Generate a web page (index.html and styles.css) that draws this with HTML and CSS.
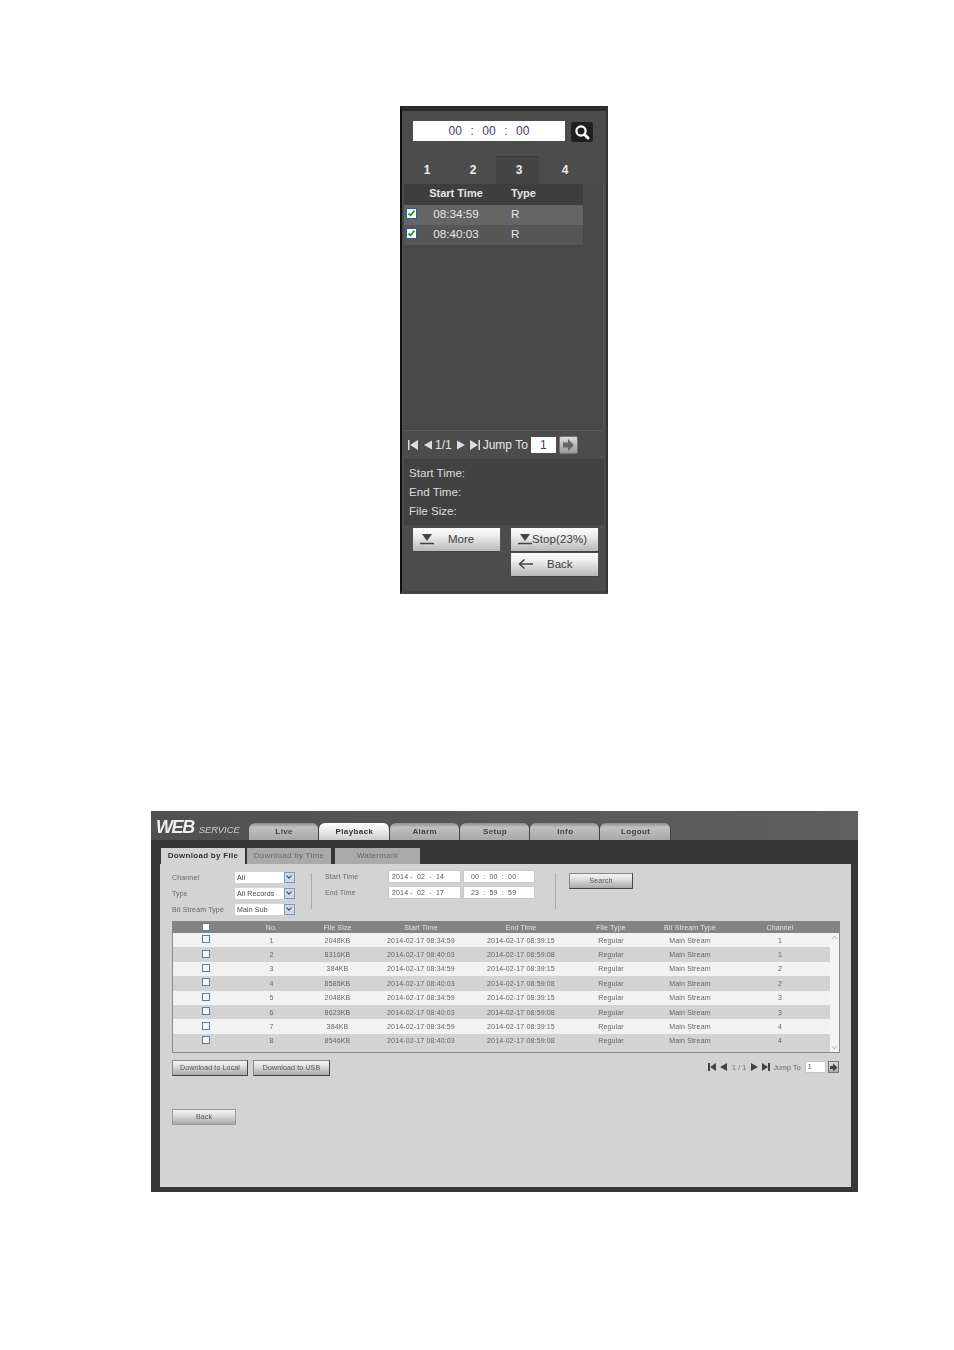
FILE: index.html
```html
<!DOCTYPE html>
<html lang="en">
<head>
<meta charset="utf-8">
<title>Playback</title>
<link rel="stylesheet" href="styles.css">
</head>
<body>
<section class="panel">
  <div class="time-row">
    <div class="time-box"><span>00</span><span>:</span><span>00</span><span>:</span><span>00</span></div>
    <div class="search-btn"><svg viewBox="0 0 22 20" width="22" height="20"><circle cx="10" cy="9" r="4.6" fill="none" stroke="#fff" stroke-width="2.2"/><path d="M13.5 12.5L17 16" stroke="#fff" stroke-width="3" stroke-linecap="round"/></svg></div>
  </div>
  <div class="num-tabs"><div>1</div><div>2</div><div class="on">3</div><div>4</div></div>
  <div class="list">
    <div class="list-table">
      <div class="lrow lhead"><span></span><span class="lt">Start Time</span><span>Type</span></div>
      <div class="lrow a"><svg class="chk" viewBox="0 0 11 11" width="11" height="11"><rect x=".5" y=".5" width="10" height="10" fill="#fff" stroke="#2a5a8a"/><path d="M2.5 5.500l2 2 4-5" fill="none" stroke="#1d9a2e" stroke-width="1.8"/></svg><span class="lt">08:34:59</span><span>R</span></div>
      <div class="lrow b"><svg class="chk" viewBox="0 0 11 11" width="11" height="11"><rect x=".5" y=".5" width="10" height="10" fill="#fff" stroke="#2a5a8a"/><path d="M2.5 5.500l2 2 4-5" fill="none" stroke="#1d9a2e" stroke-width="1.8"/></svg><span class="lt">08:40:03</span><span>R</span></div>
    </div>
  </div>
  <div class="pager">
    <svg viewBox="0 0 12 12" width="12" height="12"><path d="M1 1h1.500v10H1zM11 1v10L3 6z" fill="#ddd"/></svg>
    <svg class="ic2" viewBox="0 0 10 12" width="10" height="12"><path d="M9 1.500v9L1 6z" fill="#ddd"/></svg>
    <span class="pnum">1/1</span>
    <svg class="ic3" viewBox="0 0 10 12" width="10" height="12"><path d="M1 1.500v9L9 6z" fill="#ddd"/></svg>
    <svg class="ic4" viewBox="0 0 12 12" width="12" height="12"><path d="M11 1H9.500v10H11zM1 1v10l8-5z" fill="#ddd"/></svg>
    <span class="jump">Jump To</span>
    <span class="page-in">1</span>
    <span class="go"><svg viewBox="0 0 14 14" width="14" height="14"><path d="M2 4.500h5V1l6 6-6 6V9.500H2z" fill="#666"/></svg></span>
  </div>
  <div class="info"><div>Start Time:</div><div>End Time:</div><div>File Size:</div></div>
  <div class="actions">
    <div class="pbtn wide"><svg viewBox="0 0 14 12" width="14" height="12"><path d="M2 1h10L7 8z" fill="#444"/><path d="M0 10.500h14" stroke="#444" stroke-width="1.500"/></svg><span class="more">More</span></div>
    <div class="stack">
      <div class="pbtn"><svg viewBox="0 0 14 12" width="14" height="12"><path d="M2 1h10L7 8z" fill="#444"/><path d="M0 10.500h14" stroke="#444" stroke-width="1.500"/></svg><span class="stop">Stop(23%)</span></div>
      <div class="pbtn"><svg viewBox="0 0 16 12" width="16" height="12"><path d="M1 6h14M6.500 1.500L1.500 6l5 4.500" fill="none" stroke="#444" stroke-width="1.500"/></svg><span class="backt">Back</span></div>
    </div>
  </div>
</section>

<section class="app">
  <header class="top">
    <div class="logo"><b>WEB</b><i>SERVICE</i></div>
    <nav class="nav"><div>Live</div><div class="on">Playback</div><div>Alarm</div><div>Setup</div><div>Info</div><div>Logout</div></nav>
  </header>
  <div class="subbar"><div class="on">Download by File</div><div class="gap1">Download by Time</div><div class="gap2">Watermark</div></div>
  <main class="content">
    <div class="filters">
      <div class="f-left">
        <label>Channel</label><div class="sel">All<i></i></div>
        <label>Type</label><div class="sel">All Records<i></i></div>
        <label>Bit Stream Type</label><div class="sel">Main Sub<i></i></div>
      </div>
      <div class="vline"></div>
      <div class="f-mid">
        <label>Start Time</label><div class="dt d">2014 - &nbsp;02 &nbsp;- &nbsp;14</div><div class="dt t">00 &nbsp;: &nbsp;00 &nbsp;: &nbsp;00</div>
        <label>End Time</label><div class="dt d">2014 - &nbsp;02 &nbsp;- &nbsp;17</div><div class="dt t">23 &nbsp;: &nbsp;59 &nbsp;: &nbsp;59</div>
      </div>
      <div class="vline v2"></div>
      <div class="gbtn search">Search</div>
    </div>
    <div class="table">
      <div class="row head"><span><em class="cb w"></em></span><span>No.</span><span>File Size</span><span>Start Time</span><span>End Time</span><span>File Type</span><span>Bit Stream Type</span><span>Channel</span></div>
      <div class="body">
        <div class="rows">
          <div class="row l"><span><em class="cb"></em></span><span>1</span><span>2048KB</span><span>2014-02-17 08:34:59</span><span>2014-02-17 08:39:15</span><span>Regular</span><span>Main Stream</span><span>1</span></div>
          <div class="row"><span><em class="cb"></em></span><span>2</span><span>8316KB</span><span>2014-02-17 08:40:03</span><span>2014-02-17 08:59:08</span><span>Regular</span><span>Main Stream</span><span>1</span></div>
          <div class="row l"><span><em class="cb"></em></span><span>3</span><span>384KB</span><span>2014-02-17 08:34:59</span><span>2014-02-17 08:39:15</span><span>Regular</span><span>Main Stream</span><span>2</span></div>
          <div class="row"><span><em class="cb"></em></span><span>4</span><span>8585KB</span><span>2014-02-17 08:40:03</span><span>2014-02-17 08:59:08</span><span>Regular</span><span>Main Stream</span><span>2</span></div>
          <div class="row l"><span><em class="cb"></em></span><span>5</span><span>2048KB</span><span>2014-02-17 08:34:59</span><span>2014-02-17 08:39:15</span><span>Regular</span><span>Main Stream</span><span>3</span></div>
          <div class="row"><span><em class="cb"></em></span><span>6</span><span>8623KB</span><span>2014-02-17 08:40:03</span><span>2014-02-17 08:59:08</span><span>Regular</span><span>Main Stream</span><span>3</span></div>
          <div class="row l"><span><em class="cb"></em></span><span>7</span><span>384KB</span><span>2014-02-17 08:34:59</span><span>2014-02-17 08:39:15</span><span>Regular</span><span>Main Stream</span><span>4</span></div>
          <div class="row"><span><em class="cb"></em></span><span>8</span><span>8546KB</span><span>2014-02-17 08:40:03</span><span>2014-02-17 08:59:08</span><span>Regular</span><span>Main Stream</span><span>4</span></div>
        </div>
        <div class="scroll"><svg viewBox="0 0 9 9" width="9" height="9"><path d="M2 6l2.500-3L7 6" fill="none" stroke="#9db8d8"/></svg><svg viewBox="0 0 9 9" width="9" height="9"><path d="M2 3l2.500 3L7 3" fill="none" stroke="#9db8d8"/></svg></div>
      </div>
    </div>
    <div class="under">
      <div class="gbtn dl">Download to Local</div>
      <div class="gbtn du">Download to USB</div>
      <div class="spager">
        <svg viewBox="0 0 8 8" width="8" height="8"><path d="M0 0h2v8H0zM8 0v8L2 4z" fill="#444"/></svg>
        <svg viewBox="0 0 7 8" width="7" height="8"><path d="M7 0v8L0 4z" fill="#444"/></svg>
        <span class="p11">1 / 1</span>
        <svg viewBox="0 0 7 8" width="7" height="8"><path d="M0 0v8l7-4z" fill="#444"/></svg>
        <svg viewBox="0 0 8 8" width="8" height="8"><path d="M8 0H6v8h2zM0 0v8l6-4z" fill="#444"/></svg>
        <span class="sj">Jump To</span>
        <span class="sin">1</span>
        <span class="sgo"><svg viewBox="0 0 9 9" width="9" height="9"><path d="M1 3h3V0.500L8.500 4.500 4 8.500V6H1z" fill="#444"/></svg></span>
      </div>
    </div>
    <div class="gbtn back">Back</div>
  </main>
</section>
</body>
</html>
```
FILE: styles.css
```css
* { box-sizing: border-box; }
html, body { margin: 0; padding: 0; background: #fff; }
body { width: 954px; height: 1350px; overflow: hidden; font-family: "Liberation Sans", Arial, sans-serif; }

/* Upper panel */
.panel {
  width: 208px; height: 488px; margin: 106px 0 0 400px;
  background: #4c4c4c; border-top: 5px solid #2b2b2b; border-left: 2px solid #111;
  border-right: 2px solid #333; border-bottom: 3px solid #444;
  color: #e6e6e6; font-size: 12px;
}
.time-row { display: flex; padding: 10px 0 0 11px; gap: 6px; }
.time-box {
  width: 152px; height: 20px; background: #fff; color: #4b3a6b; font-size: 12px;
  display: flex; justify-content: center; gap: 8.500px; line-height: 20px;
}
.search-btn { width: 22px; height: 20px; margin-top: 1px; background: #1f1f1f; border-radius: 3px; }
.search-btn svg { display: block; }
.num-tabs { display: flex; margin: 14px 0 0 2px; height: 28px; }
.num-tabs div { width: 46px; text-align: center; font-weight: bold; font-size: 12px; line-height: 28px; color: #eee; }
.num-tabs .on { width: 43px; background: #444; border-top: 1px solid #3a3a3a; margin-right: 3px; padding-left: 3px; line-height: 26px; }
.list { margin-left: 2px; width: 200px; height: 247px; background: #484848; border-bottom: 1px solid #5a5a5a; border-right: 1px solid #555; }
.list-table { width: 179px; }
.lrow { display: grid; grid-template-columns: 14px 76px 1fr; align-items: center; height: 20px; padding-bottom: 3px; font-size: 11.700px; }
.lrow .lt { text-align: center; }
.lrow span:last-child { padding-left: 17px; }
.lhead { height: 21px; background: #3e3e3e; font-weight: bold; font-size: 11px; }
.lrow.a { background: #656565; }
.lrow.b { background: #565656; }
.chk { margin: -1px 0 0 2px; }
.pager { display: flex; align-items: center; width: 202px; height: 28px; padding: 0 0 0 5px; font-size: 12px; color: #e6e6e6; }
.pager svg { flex: none; }
.ic2 { margin-left: 4px; }
.pnum { margin-left: 2px; }
.ic3 { margin-left: 4px; }
.ic4 { margin-left: 3px; }
.jump { margin-left: 2px; }
.page-in { width: 25px; height: 16px; background: #fff; color: #5a2a7a; text-align: center; line-height: 16px; margin-left: 3px; }
.go { width: 19px; height: 18px; background: linear-gradient(#ddd, #999); margin-left: 3px; border: 1px solid #777; display: flex; align-items: center; justify-content: center; border-radius: 2px; }
.info { margin-left: 2px; width: 200px; height: 66px; background: #424242; padding: 4px 0 0 5px; font-size: 11.600px; line-height: 19px; color: #ddd; }
.actions { display: flex; gap: 10px; padding: 3px 0 0 11px; }
.pbtn {
  width: 88px; height: 24px; background: linear-gradient(#fbfbfb, #f0f0f0 30%, #b9b9b9);
  border-right: 1px solid #555; border-bottom: 1px solid #444; color: #3c3c3c; font-size: 11.500px;
  display: flex; align-items: center; padding: 0 0 2px 7px;
}
.more { margin-left: 14px; }
.backt { margin-left: 13px; }
.stop { letter-spacing: .1px; }
.stack { display: flex; flex-direction: column; gap: 1px; }

/* Lower app */
.app { width: 707px; height: 381px; margin: 217px 0 0 151px; background: #363636; filter: blur(.3px); }
.top { height: 29px; background: linear-gradient(90deg, #505050, #5f5f5f); display: flex; }
.logo { width: 98px; color: #eee; padding: 6px 0 0 5px; line-height: 16px; white-space: nowrap; }
.logo b { font: italic bold 18px "Liberation Sans", sans-serif; letter-spacing: -1.400px; }
.logo i { font-size: 9.500px; margin-left: 5px; color: #ccc; letter-spacing: -.1px; }
.nav { display: flex; padding-top: 12px; }
.nav div {
  width: 70.300px; height: 17px; padding-left: 1px; text-align: center; font-size: 8px; font-weight: bold; line-height: 17px; letter-spacing: .4px;
  background: linear-gradient(#8e8e8e, #c0c0c0 25%, #a8a8a8); color: #444; border-radius: 6px 6px 0 0; border-right: 1px solid #444;
}
.nav .on { background: linear-gradient(#fff, #eee 40%, #ccc); color: #333; }
.subbar { height: 24px; display: flex; align-items: flex-end; padding-left: 10px; font-size: 8px; letter-spacing: .3px; color: #666; }
.subbar div { height: 16px; line-height: 15px; background: #aaa; text-align: center; }
.subbar .on { width: 84px; background: #d3d3d3; color: #333; font-weight: bold; }
.subbar .gap1 { width: 84px; margin-left: 2px; }
.subbar .gap2 { width: 85px; margin-left: 4px; }
.content { margin-left: 9px; width: 691px; height: 323px; background: #d3d3d3; padding: 0 0 0 12px; color: #666; font-size: 7px; letter-spacing: .15px; }
.filters { display: flex; height: 57px; padding-top: 5px; }
.f-left { display: grid; grid-template-columns: 63px 60px; grid-auto-rows: 16px; width: 139px; align-items: center; }
.sel { width: 60px; height: 11px; background: #fff; color: #444; line-height: 11px; padding-left: 2px; position: relative; }
.sel i { position: absolute; right: 0; top: 0; width: 11px; height: 11px; background: #cfd9e6; border: 1px solid #7d9ab8; }
.sel i::after { content: ""; position: absolute; left: 2px; top: 1px; width: 3px; height: 3px; border-right: 1.500px solid #345; border-bottom: 1.500px solid #345; transform: rotate(45deg); }
.vline { width: 1px; height: 36px; margin-top: 4px; background: #aaa; }
.f-mid { display: grid; grid-template-columns: 63px 73px 72px; grid-auto-rows: 16px; margin: 1px 0 0 13px; width: 167px; align-items: start; }
.f-mid label { padding-top: 3px; }
.dt { width: 73px; height: 13px; background: #fff; border: 1px solid #c8c8c8; color: #555; line-height: 12px; padding-left: 3px; white-space: nowrap; }
.dt.t { width: 72px; margin-left: 2px; padding-left: 7px; }
.v2 { margin-left: 63px; }
.gbtn {
  background: linear-gradient(#f4f4f4, #e4e4e4 30%, #a8a8a8); border: 1px solid #888; border-right-color: #444; border-bottom-color: #444;
  text-align: center; color: #555;
}
.search { width: 64px; height: 16px; line-height: 14px; margin: 4px 0 0 13px; }
.table { width: 668px; height: 132px; border: 1px solid #8a8a8a; border-top: none; }
.row { display: grid; grid-template-columns: 67px 63px 69px 98px 102px 78px 80px 100px; height: 14.400px; align-items: center; text-align: center; color: #666; }
.row.l { background: #f2f2f2; }
.row.head { height: 12px; background: #848484; color: #e2e2e2; width: 668px; margin-left: -1px; grid-template-columns: 68px 63px 69px 98px 102px 78px 80px 100px 10px; }
.body { display: flex; }
.rows { width: 657px; }
.scroll { width: 10px; height: 119px; background: #f4f4f4; display: flex; flex-direction: column; justify-content: space-between; }
.cb { display: block; width: 8px; height: 8px; margin: -2px 0 0 29px; background: #f6f6f6; border: 1px solid #5f7f9f; }
.cb.w { background: #fff; margin: -1px 0 0 30px; }
.under { display: flex; margin-top: 7px; height: 16px; align-items: flex-start; }
.dl { width: 76px; height: 16px; line-height: 14px; }
.du { width: 77px; height: 16px; line-height: 14px; margin-left: 5px; }
.spager { display: flex; align-items: center; height: 14px; margin-left: 378px; gap: 4px; }
.spager svg { flex: none; }
.p11 { color: #7a6a8a; margin: 0 1px; }
.sj { margin-left: -1px; }
.sin { width: 21px; height: 12px; background: #fff; border: 1px solid #c8c8c8; line-height: 10px; padding-left: 2px; color: #5a4a7a; }
.sgo { width: 11px; height: 12px; background: linear-gradient(#ddd, #aaa); border: 1px solid #777; margin-left: -2px; display: flex; align-items: center; justify-content: center; }
.back { width: 64px; height: 16px; line-height: 14px; margin-top: 33px; border-color: #999; }
label { display: block; }
```
